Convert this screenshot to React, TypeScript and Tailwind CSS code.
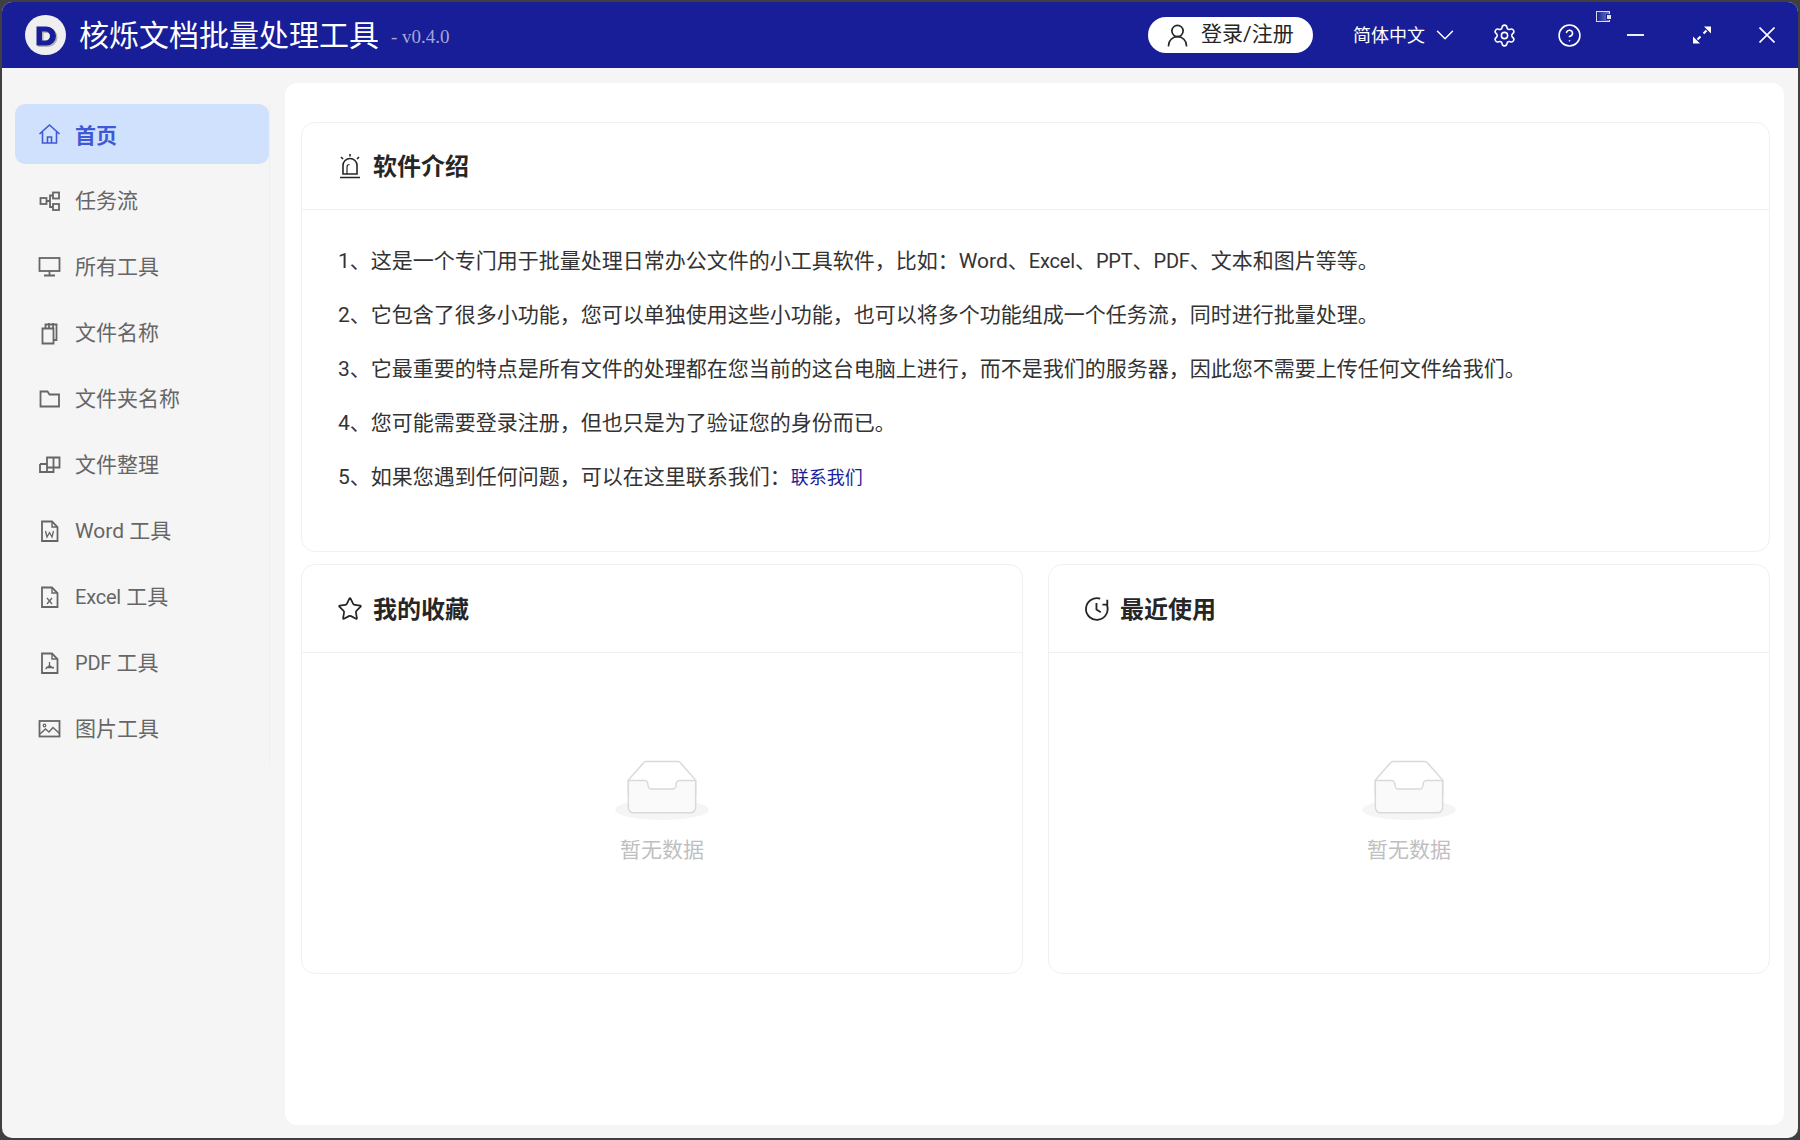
import React from "react";
import { Settings, CircleHelp, Star, ChevronDown, UserRound } from "lucide-react";

const iconProps = { width: 24, height: 24, viewBox: "0 0 24 24", fill: "none", stroke: "currentColor", strokeWidth: 1.8 };

const HomeIcon = () => (
  <svg {...iconProps} strokeWidth={1.6}>
    <path d="M1.5 12L11.5 3l10 9M4.5 10v11h14V10M9.5 21v-6h4v6" />
  </svg>
);

const FlowIcon = () => (
  <svg {...iconProps}>
    <rect x="2.5" y="9" width="6" height="6" />
    <rect x="15" y="3.5" width="6" height="6" />
    <rect x="15" y="15" width="6" height="6" />
    <path d="M8.5 12H12V6.5h3M12 12v6h3" />
  </svg>
);

const MonitorIcon = () => (
  <svg {...iconProps}>
    <rect x="1.5" y="3" width="20" height="13" />
    <path d="M11.5 16v4M6 20.5h11" />
  </svg>
);

const NamesIcon = () => (
  <svg {...iconProps}>
    <path d="M4.500 7.500h11v15h-11zM7.500 7.500V3.500h11v15.500h-3M11 2v5.500M15 2v5.500" />
  </svg>
);

const FolderIcon = () => (
  <svg {...iconProps}>
    <path d="M2.5 4.5h7l2 3h9.5v12h-18.500z" />
  </svg>
);

const SortIcon = () => (
  <svg {...iconProps}>
    <path d="M9 4.500h12.500v10H9zM15.500 4.500v10M2 11h7M2 11v8h13.500v-4.500M9 11v8" />
  </svg>
);

const FileBase = ({ children }: { children?: React.ReactNode }) => (
  <svg {...iconProps}>
    <path d="M4 2.500h10l5.500 5.500v14H4z" />
    <path d="M14 2.500v5.500h5.500" strokeWidth="1.400" />
    {children}
  </svg>
);

const ImageIcon = () => (
  <svg {...iconProps}>
    <rect x="1.500" y="4" width="20" height="15.500" />
    <circle cx="6.500" cy="8.500" r="1.300" strokeWidth="1.200" />
    <path d="M2 17l5.500-5 3.500 3 4-4.500 6.500 6" strokeWidth="1.500" />
  </svg>
);

// Excel, PPT and PDF sit narrower in the reference than any installed face
const Narrow = ({ children }: { children: React.ReactNode }) => (
  <span className="text-[20px] tracking-[-0.2px]">{children}</span>
);

const menu = [
  { key: "home", label: "首页", icon: <HomeIcon />, active: true },
  { key: "flow", label: "任务流", icon: <FlowIcon /> },
  { key: "tools", label: "所有工具", icon: <MonitorIcon /> },
  { key: "names", label: "文件名称", icon: <NamesIcon /> },
  { key: "folders", label: "文件夹名称", icon: <FolderIcon /> },
  { key: "sort", label: "文件整理", icon: <SortIcon /> },
  {
    key: "word",
    label: "Word 工具",
    icon: (
      <FileBase>
        <path d="M7.500 12l1.500 6 2.500-4.500L14 18l1.500-6" strokeWidth="1.300" />
      </FileBase>
    ),
  },
  {
    key: "excel",
    label: (
      <>
        <Narrow>Excel</Narrow> 工具
      </>
    ),
    icon: (
      <FileBase>
        <path d="M9 13l5 6M14 13l-5 6" strokeWidth="1.300" />
      </FileBase>
    ),
  },
  {
    key: "pdf",
    label: (
      <>
        <Narrow>PDF</Narrow> 工具
      </>
    ),
    icon: (
      <FileBase>
        <path d="M11.500 11v3.500l-4 3.500M11.500 14.500l4 3M8 16.500h8" strokeWidth="1.300" />
      </FileBase>
    ),
  },
  { key: "images", label: "图片工具", icon: <ImageIcon /> },
];

const CardHeader = ({ icon, title, tall }: { icon: React.ReactNode; title: string; tall?: boolean }) => (
  <div
    className={
      tall
        ? "flex h-[88px] items-center gap-[10px] border-b border-[#f0f0f0] pl-[35px] text-[#262626]"
        : "flex h-[87px] items-center gap-[10px] border-b border-[#f0f0f0] pl-[35px] text-[#262626]"
    }
  >
    <span className="flex w-[26px] shrink-0 justify-center">{icon}</span>
    <span className="mt-[2px] text-[24px] font-bold">{title}</span>
  </div>
);

const EmptyBox = () => (
  <div className="flex flex-1 flex-col items-center pt-[107px]">
    <svg width="94" height="60" viewBox="0 0 64 41">
      <g transform="translate(0 1)" fill="none" fillRule="evenodd">
        <ellipse fill="#f5f5f5" cx="32" cy="33" rx="32" ry="7" />
        <g fillRule="nonzero" stroke="#d9d9d9">
          <path d="M55 12.76L44.854 1.258C44.367.474 43.656 0 42.907 0H21.093c-.749 0-1.46.474-1.947 1.257L9 12.761V22h46v-9.24z" />
          <path
            d="M41.613 15.931c0-1.605.994-2.93 2.227-2.931H55v18.137C55 33.26 53.68 35 52.05 35h-40.1C10.32 35 9 33.259 9 31.137V13h11.16c1.233 0 2.227 1.323 2.227 2.928v.022c0 1.605 1.005 2.901 2.237 2.901h14.752c1.232 0 2.237-1.308 2.237-2.913v-.007z"
            fill="#fafafa"
          />
        </g>
      </g>
    </svg>
    <div className="mt-[14px] text-[21px] leading-[32px] text-[#bfbfbf]">暂无数据</div>
  </div>
);

const App: React.FC = () => {
  return (
    <div className="h-screen w-screen overflow-hidden bg-[#3f3f3f] p-[2px] font-['Roboto','Noto_Sans_CJK_SC',sans-serif]">
      <div className="flex h-full flex-col overflow-hidden rounded-[10px] bg-[#f5f5f5]">
        {/* title bar */}
        <div className="flex h-[66px] shrink-0 items-center bg-[#181e98] text-white">
          <div className="ml-[23px] flex h-[40px] w-[41px] items-center justify-center rounded-full bg-[#efefef]">
            <svg width="28" height="28" viewBox="0 0 28 28" className="mt-[2px]">
              <path fillRule="evenodd" fill="#b4b4b4" d="M6 6h10a9.500 9.500 0 0 1 0 19H6zM11.500 11v9H15a4.500 4.500 0 0 0 0-9z" />
              <path fillRule="evenodd" fill="#181e98" d="M4.500 4.500h10a9.500 9.500 0 0 1 0 19h-10zM10 9.500v9h3.500a4.500 4.500 0 0 0 0-9z" />
            </svg>
          </div>
          <div className="ml-[13px] mt-[2px] text-[30px] leading-[44px]">核烁文档批量处理工具</div>
          <div className="ml-[12px] mt-[4px] font-['Liberation_Serif',serif] text-[19px] text-[#a3a6d6]">- v0.4.0</div>

          <div className="ml-auto flex h-[36px] w-[165px] items-center rounded-full bg-white pl-[16px] text-[#262626]">
            <UserRound size={27} strokeWidth={1.5} />
            <span className="ml-[10px] text-[21px]">登录/注册</span>
          </div>
          <div className="ml-[40px] text-[18px]">简体中文</div>
          <ChevronDown size={30} strokeWidth={1.2} className="ml-[5px]" />
          <Settings size={25} strokeWidth={1.5} className="ml-[32px]" />
          <CircleHelp size={25} strokeWidth={1.5} className="ml-[40px]" />
          <div className="relative ml-[45px] h-[2px] w-[17px] bg-[#eeeef8]">
            <div className="absolute left-[-31px] top-[-23px] h-[11px] w-[14px] border border-[#dcdcdc] bg-linear-to-r from-[#181e98] to-[#6f73b8]">
              <div className="absolute right-[-3px] top-[2px] h-[6px] w-[6px] border border-[#181e98] bg-[#e4e4e4]" />
            </div>
          </div>
          <svg width="18" height="18" viewBox="0 0 18 18" fill="white" stroke="none" className="ml-[49px]">
            <path d="M11 0.500h7v7z" />
            <path d="M0 10.500v7h7z" />
            <path d="M13.500 4.500L10.500 7.500M4.500 13.500L7.500 10.500" stroke="white" strokeWidth="2" />
          </svg>
          <svg width="16" height="16" viewBox="0 0 16 16" fill="none" stroke="white" strokeWidth="1.600" className="ml-[48px] mr-[23px]">
            <path d="M0.500 0.500l15 15M15.500 0.500l-15 15" />
          </svg>
        </div>

        <div className="flex min-h-0 flex-1">
          {/* side menu */}
          <div className="w-[283px] shrink-0 pt-[36px]">
            <div className="h-[660px] w-[268px] border-r border-[#efefef]">
              {menu.map((item) => (
                <div
                  key={item.key}
                  className={
                    item.active
                      ? "mb-[5px] ml-[13px] flex h-[60px] w-[254px] items-center rounded-[10px] bg-[#d0e1fd] pl-[23px] text-[#3f58d6]"
                      : "ml-[13px] flex h-[66px] w-[254px] items-center pl-[23px] text-[#666666]"
                  }
                >
                  <span className={item.active ? "w-[24px] shrink-0" : "-mt-[2px] w-[24px] shrink-0"}>{item.icon}</span>
                  <span className={item.active ? "ml-[13px] mt-[5px] text-[21px] font-bold" : "ml-[13px] text-[21px]"}>
                    {item.label}
                  </span>
                </div>
              ))}
            </div>
          </div>

          {/* content */}
          <div className="mb-[13px] mr-[14px] mt-[15px] flex min-w-0 flex-1 flex-col gap-[12px] rounded-[12px] bg-white pl-[16px] pr-[14px] pt-[39px]">
            <div className="h-[430px] rounded-[14px] border border-[#f0f0f0]">
              <CardHeader
                title="软件介绍"
                icon={
                  <svg width="22" height="25" viewBox="0 0 22 25" fill="none" stroke="currentColor" strokeWidth="1.600">
                    <path d="M4 20v-8.500a7 7 0 0 1 14 0V20zM1 23.500h20" />
                    <path d="M8 20v-7a2.500 2.500 0 0 1 2.500-2.500" strokeWidth="1.200" />
                    <path d="M11 0v2.500M2 3l2 2M20 3l-2 2" />
                  </svg>
                }
              />
              <div className="pl-[36px] pt-[24px] text-[21px] leading-[54px] text-[#333333]">
                <div>
                  1、这是一个专门用于批量处理日常办公文件的小工具软件，比如：Word、<Narrow>Excel</Narrow>、<Narrow>PPT</Narrow>、
                  <Narrow>PDF</Narrow>、文本和图片等等。
                </div>
                <div>2、它包含了很多小功能，您可以单独使用这些小功能，也可以将多个功能组成一个任务流，同时进行批量处理。</div>
                <div>3、它最重要的特点是所有文件的处理都在您当前的这台电脑上进行，而不是我们的服务器，因此您不需要上传任何文件给我们。</div>
                <div>4、您可能需要登录注册，但也只是为了验证您的身份而已。</div>
                <div>
                  5、如果您遇到任何问题，可以在这里联系我们：
                  <span className="text-[18px] text-[#1a1f9b]">联系我们</span>
                </div>
              </div>
            </div>
            <div className="flex h-[410px] gap-[25px]">
              <div className="flex flex-1 flex-col rounded-[14px] border border-[#f0f0f0]">
                <CardHeader tall title="我的收藏" icon={<Star size={26} strokeWidth={1.6} />} />
                <EmptyBox />
              </div>
              <div className="flex flex-1 flex-col rounded-[14px] border border-[#f0f0f0]">
                <CardHeader
                  tall
                  title="最近使用"
                  icon={
                    <svg width="26" height="26" viewBox="0 0 24 24" fill="none" stroke="currentColor" strokeWidth="1.700">
                      <path d="M21 8A10 10 0 1 1 15 2.500M11.500 6.500v6l4 2.500M21.500 3.500V8H17" />
                    </svg>
                  }
                />
                <EmptyBox />
              </div>
            </div>
          </div>
        </div>
      </div>
    </div>
  );
};

export default App;
